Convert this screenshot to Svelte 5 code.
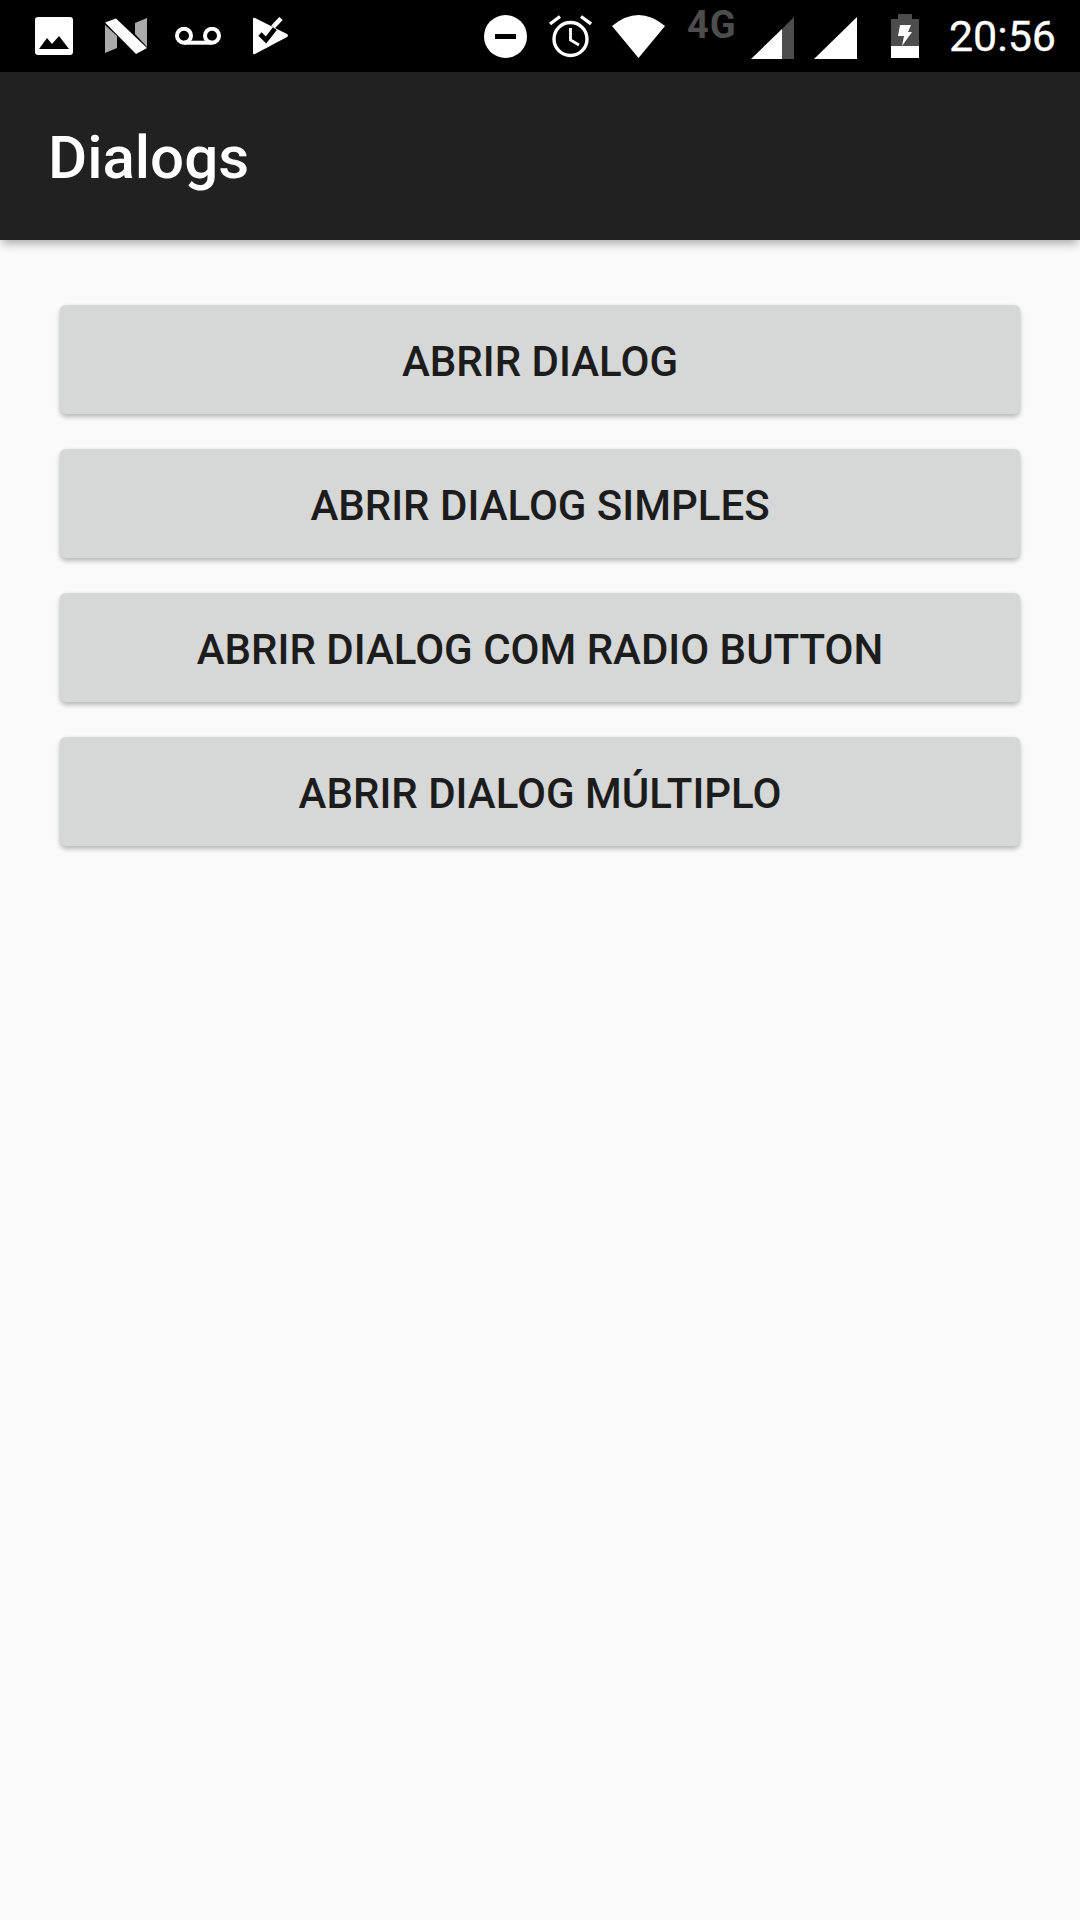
<script>
  const buttons = [
    'ABRIR DIALOG',
    'ABRIR DIALOG SIMPLES',
    'ABRIR DIALOG COM RADIO BUTTON',
    'ABRIR DIALOG MÚLTIPLO'
  ];
</script>

<div class="screen">
  <div class="status-bar">
    <div class="left-icons">
      <svg width="38" height="38" viewBox="0 0 38 38">
        <path fill-rule="evenodd" fill="#fff" d="M3 0H35A3 3 0 0 1 38 3V35A3 3 0 0 1 35 38H3A3 3 0 0 1 0 35V3A3 3 0 0 1 3 0ZM4 32H34L24 19L17 27L12 21Z"/>
      </svg>
      <svg class="n-logo" width="44" height="37" viewBox="0 0 44 37">
        <path fill="#aaa" d="M2 7V35L14 30V18Z"/>
        <path fill="#aaa" d="M44 0V29L32 16V5Z"/>
        <path fill="#fff" d="M2 4.500L13 0.500L44 30L33 36Z"/>
      </svg>
      <svg class="voicemail" width="46" height="18" viewBox="0 0 46 18" fill="none" stroke="#fff" stroke-width="4">
        <circle cx="9" cy="8.700" r="7"/>
        <circle cx="37" cy="8.700" r="7"/>
        <path d="M9 15.700H37"/>
      </svg>
      <svg width="36" height="38" viewBox="0 0 36 38">
        <path fill="#fff" d="M0 2Q0 0 2 1L34 17Q36 18.500 34 20L2 37Q0 38 0 36Z"/>
        <path d="M7 17L13 23L22 11.500" fill="none" stroke="#000" stroke-width="4.600"/>
        <path d="M20 10L28 1.500" fill="none" stroke="#fff" stroke-width="4.600"/>
      </svg>
    </div>
    <div class="right-icons">
      <svg class="dnd" width="43" height="43" viewBox="0 0 43 43">
        <circle cx="21.500" cy="21.500" r="21.500" fill="#fff"/>
        <rect x="11" y="19" width="21" height="5" fill="#000"/>
      </svg>
      <svg class="alarm" width="43" height="43" viewBox="0 0 43 43" fill="none" stroke="#fff">
        <circle cx="21.500" cy="24" r="16.500" stroke-width="3.400"/>
        <path d="M21.500 13V25L30 30" stroke-width="2.800"/>
        <path d="M1 9L11 1.500M42 9L32 1.500" stroke-width="3.400"/>
      </svg>
      <svg class="wifi" width="53" height="43" viewBox="0 0 53 43">
        <path fill="#fff" d="M0 11Q26.500 -11 53 11L26.500 43Z"/>
      </svg>
      <span class="net">4G</span>
      <svg class="sig1" width="43" height="42" viewBox="0 0 43 42">
        <path fill="#4d4d4d" d="M43 0V42H31V12Z"/>
        <path fill="#fff" d="M31 12V42H0Z"/>
      </svg>
      <svg class="sig2" width="43" height="42" viewBox="0 0 43 42">
        <path fill="#fff" d="M43 0V42H0Z"/>
      </svg>
      <svg class="battery" width="28" height="44" viewBox="0 0 28 44">
        <path fill="#4d4d4d" d="M7 0H21V5H28V32H0V5H7Z"/>
        <rect y="32" width="28" height="12" fill="#fff"/>
        <path fill="#fff" d="M9 11H20L17 18H21L11 32L13 22H7Z"/>
      </svg>
      <span class="time">20:56</span>
    </div>
  </div>

  <header class="app-bar">Dialogs</header>

  <main class="content">
    {#each buttons as label}
      <button class="btn">{label}</button>
    {/each}
  </main>
</div>

<style>
  :global(body){
    margin:0;
    background:#fafafa;
  }

  .screen{
    width:1080px;
    height:1920px;
    display:flex;
    flex-direction:column;
    background:#fafafa;
    font-family:Roboto, "Liberation Sans", sans-serif;
    overflow:hidden;
  }

  .status-bar{
    height:72px;
    flex-shrink:0;
    background:#000;
    display:flex;
    align-items:center;
    justify-content:space-between;
    padding:0 24px 0 35px;
  }
  .left-icons{ display:flex; align-items:center; gap:30px; }
  .n-logo{ margin-right:-2px; }
  .voicemail{ margin-right:2px; }
  .right-icons{ display:flex; align-items:center; height:72px; }
  .right-icons svg, .net{ flex-shrink:0; }

  .dnd{ margin-right:22px; }
  .alarm{ margin-right:20px; }
  .wifi{ margin-right:22px; }
  .net{
    width:50px;
    font-size:38px;
    font-weight:700;
    line-height:38px;
    letter-spacing:1px;
    color:#4d4d4d;
    margin:-22px 14px 0 0;
    white-space:nowrap;
  }
  .sig1{ margin-right:20px; margin-top:4px; }
  .sig2{ margin-right:34px; margin-top:4px; }
  .battery{ margin-right:30px; }
  .time{
    font-size:43px;
    color:#fff;
    line-height:72px;
    -webkit-text-stroke:0.3px #fff;
  }

  .app-bar{
    height:168px;
    flex-shrink:0;
    box-sizing:border-box;
    padding:2px 0 0 48px;
    display:flex;
    align-items:center;
    background:#212121;
    color:#fff;
    font-size:60px;
    font-weight:500;
    box-shadow:0 5px 10px -2px rgba(0,0,0,.35);
    position:relative;
  }

  .content{
    display:flex;
    flex-direction:column;
    gap:35px;
    padding:65px 60px 0;
  }

  .btn{
    height:109px;
    padding:4px 0 0;
    border:none;
    border-radius:6px;
    background:#d6d7d7;
    color:#1c1c1c;
    font-family:inherit;
    font-size:42px;
    font-weight:500;
    box-shadow:0 3px 5px rgba(0,0,0,.26), 0 0 3px rgba(0,0,0,.05);
  }
</style>
